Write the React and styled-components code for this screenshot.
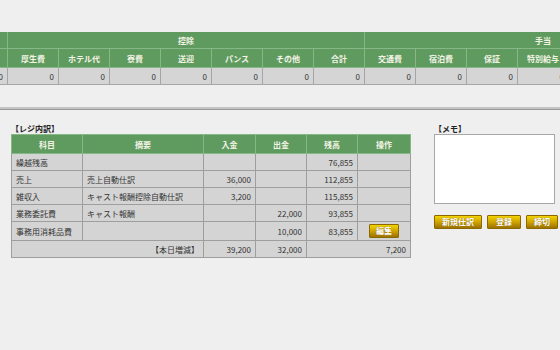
import React from 'react';
import styled, { createGlobalStyle } from 'styled-components';

const GlobalStyle = createGlobalStyle`
  html, body {
    margin: 0;
    padding: 0;
    background: #efefef;
  }
  body {
    width: 560px;
    height: 350px;
    overflow: hidden;
    font-family: "Noto Sans CJK JP", "Liberation Sans", sans-serif;
    color: #333;
  }
`;

const TopScroll = styled.div`
  width: 560px;
  overflow: hidden;
  padding-top: 32px;
`;

const WideTable = styled.table`
  border-collapse: collapse;
  table-layout: fixed;
  margin-left: -44px;
  width: ${p => p.cols * 51}px;
`;

const GreenTh = styled.th`
  background: #5f9b5f;
  color: #f3f3e6;
  font-size: 8px;
  font-weight: bold;
  height: ${p => p.h || 18}px;
  border: 1px solid #86b786;
  border-top: none;
  padding: 0;
  white-space: nowrap;
  overflow: hidden;
`;

const ValueTd = styled.td`
  background: #d5d5d5;
  border: 1px solid #a5a5a5;
  text-align: right;
  padding: 0 4px 0 0;
  font-size: 8px;
  height: 16px;
  color: #333;
`;

const Divider = styled.div`
  margin-top: 22px;
  border-top: 2px solid #c4c4c4;
  border-bottom: 1px solid #9a9a9a;
`;

const Lower = styled.div`
  display: flex;
  gap: 24px;
  padding: 14px 0 0 11px;
`;

const Block = styled.div`
  width: ${p => p.w}px;
  flex-shrink: 0;
  display: flex;
  flex-direction: column;
`;

const Label = styled.div`
  font-size: 8px;
  font-weight: bold;
  color: #222;
  height: 10px;
  line-height: 10px;
`;

const RegTable = styled.table`
  border-collapse: collapse;
  table-layout: fixed;
  width: 399px;
  border: 1px solid #999;
`;

const RegTh = styled.th`
  background: #5f9b5f;
  color: #f3f3e6;
  font-size: 8px;
  font-weight: bold;
  height: 18px;
  padding: 0;
  border: 1px solid #86b786;
`;

const RegTd = styled.td`
  background: #d4d4d4;
  border: 1px solid #9e9e9e;
  font-size: 8px;
  height: ${p => p.h || 16}px;
  padding: 0 4px;
  text-align: ${p => p.align || 'left'};
  white-space: nowrap;
  color: #333;
`;

const GoldButton = styled.button`
  background: linear-gradient(#f3d400, #d0a400 50%, #9c7100);
  border: 1px solid #8c6800;
  border-radius: 1px;
  color: #fff;
  font-family: inherit;
  font-size: 8px;
  font-weight: bold;
  height: 14px;
  line-height: 12px;
  padding: 0 ${p => p.px || 7}px;
  white-space: nowrap;
  flex-shrink: 0;
  text-shadow: 0 0 1px #7a5800;
  cursor: pointer;
`;

const Memo = styled.textarea`
  width: 121px;
  height: 70px;
  box-sizing: border-box;
  border: 1px solid #a8a8a8;
  background: #fff;
  resize: none;
  margin: 0;
`;

const ButtonRow = styled.div`
  display: flex;
  gap: 5px;
  margin-top: 11px;
`;

const deductions = ['厚生費', 'ホテル代', '寮費', '送迎', 'パンス', 'その他', '合計'];
const allowances = ['交通費', '宿泊費', '保証', '特別給与', '皆勤', '指名', '合計'];

const rows = [
  { item: '繰越残高', memo: '', inc: '', out: '', bal: '76,855' },
  { item: '売上', memo: '売上自動仕訳', inc: '36,000', out: '', bal: '112,855' },
  { item: '雑収入', memo: 'キャスト報酬控除自動仕訳', inc: '3,200', out: '', bal: '115,855' },
  { item: '業務委託費', memo: 'キャスト報酬', inc: '', out: '22,000', bal: '93,855' },
  { item: '事務用消耗品費', memo: '', inc: '', out: '10,000', bal: '83,855', edit: true },
];

function App() {
  const cols = 1 + deductions.length + allowances.length;
  return (
    <>
      <GlobalStyle />
      <TopScroll>
        <WideTable cols={cols}>
          <colgroup>
            {Array.from({ length: cols }).map((_, i) => (
              <col key={i} style={{ width: 51 }} />
            ))}
          </colgroup>
          <thead>
            <tr>
              <GreenTh h={16}></GreenTh>
              <GreenTh h={16} colSpan={deductions.length}>控除</GreenTh>
              <GreenTh h={16} colSpan={allowances.length}>手当</GreenTh>
            </tr>
            <tr>
              <GreenTh></GreenTh>
              {deductions.map(d => <GreenTh key={d}>{d}</GreenTh>)}
              {allowances.map((a, i) => <GreenTh key={i}>{a}</GreenTh>)}
            </tr>
          </thead>
          <tbody>
            <tr>
              {Array.from({ length: cols }).map((_, i) => (
                <ValueTd key={i}>0</ValueTd>
              ))}
            </tr>
          </tbody>
        </WideTable>
      </TopScroll>
      <Divider />
      <Lower>
        <Block w={399}>
          <Label>【レジ内訳】</Label>
          <RegTable>
            <colgroup>
              <col style={{ width: 71 }} />
              <col style={{ width: 121 }} />
              <col style={{ width: 52 }} />
              <col style={{ width: 51 }} />
              <col style={{ width: 51 }} />
              <col style={{ width: 53 }} />
            </colgroup>
            <thead>
              <tr>
                <RegTh>科目</RegTh>
                <RegTh>摘要</RegTh>
                <RegTh>入金</RegTh>
                <RegTh>出金</RegTh>
                <RegTh>残高</RegTh>
                <RegTh>操作</RegTh>
              </tr>
            </thead>
            <tbody>
              {rows.map(r => (
                <tr key={r.item}>
                  <RegTd h={r.edit ? 18 : 16}>{r.item}</RegTd>
                  <RegTd>{r.memo}</RegTd>
                  <RegTd align="right">{r.inc}</RegTd>
                  <RegTd align="right">{r.out}</RegTd>
                  <RegTd align="right">{r.bal}</RegTd>
                  <RegTd align="center">
                    {r.edit && <GoldButton px={6}>編集</GoldButton>}
                  </RegTd>
                </tr>
              ))}
              <tr>
                <RegTd colSpan={2} align="right">【本日増減】</RegTd>
                <RegTd align="right">39,200</RegTd>
                <RegTd align="right">32,000</RegTd>
                <RegTd colSpan={2} align="right">7,200</RegTd>
              </tr>
            </tbody>
          </RegTable>
        </Block>
        <Block w={121}>
          <Label>【メモ】</Label>
          <Memo />
          <ButtonRow>
            <GoldButton>新規仕訳</GoldButton>
            <GoldButton px={8}>登録</GoldButton>
            <GoldButton px={7}>締切</GoldButton>
          </ButtonRow>
        </Block>
      </Lower>
    </>
  );
}

export default App;
